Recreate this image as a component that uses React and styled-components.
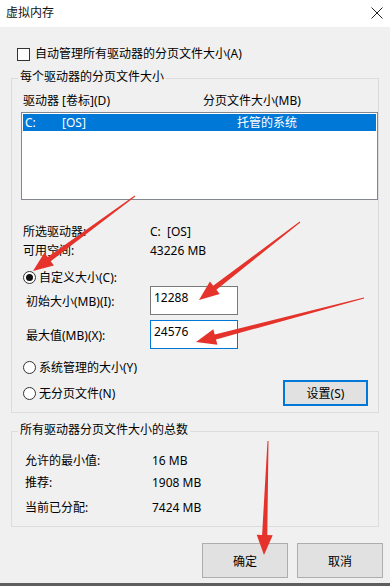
import React from "react";
import styled, { createGlobalStyle } from "styled-components";

const Global = createGlobalStyle`
  html, body { margin: 0; padding: 0; }
  body {
    width: 390px; height: 586px; overflow: hidden; background: #f0f0f0;
    font-family: "Noto Sans", "Noto Sans CJK SC", sans-serif;
    font-size: 12px; color: #000;
  }
  * { box-sizing: border-box; }
`;

const Window = styled.div`
  position: relative;
  width: 390px;
  height: 586px;
  display: flex;
  flex-direction: column;
  background: #f0f0f0;
  overflow: hidden;
`;

const TitleBar = styled.div`
  height: 27px;
  flex: none;
  background: #fff;
  display: flex;
  align-items: center;
  justify-content: space-between;
  padding: 0 7px 1px 6px;
  line-height: 16px;
`;

const Title = styled.span`
  color: #111;
`;

const CheckRow = styled.label`
  display: flex;
  align-items: center;
  gap: 5px;
  height: 18px;
  line-height: 18px;
  margin: 18px 0 0 17px;
`;

const CheckBox = styled.span`
  width: 13px;
  height: 13px;
  border: 1px solid #333;
  background: #fff;
  flex: none;
`;

const Group = styled.fieldset`
  margin: ${(p) => p.$top}px 11px 0 11px;
  padding: 0 0 ${(p) => p.$bottom}px 0;
  border: 1px solid #dcdcdc;
  min-width: 0;
`;

const Legend = styled.legend`
  margin-left: 6px;
  padding: 0 2px 2px;
  line-height: 16px;
  color: #000;
`;

const HeaderRow = styled.div`
  display: grid;
  grid-template-columns: 180px 1fr;
  padding-left: 11px;
  margin-top: 5px;
  line-height: 18px;
  height: 18px;
`;

const ListBox = styled.div`
  margin: 2px 0 0 9px;
  height: 88px;
  border: 1px solid #828790;
  background: #fff;
  padding: 1px;
`;

const ListRow = styled.div`
  display: grid;
  grid-template-columns: 37px 175px 1fr;
  height: 17px;
  line-height: 17px;
  padding-left: 2px;
  background: ${(p) => (p.$selected ? "#0078d7" : "transparent")};
  color: ${(p) => (p.$selected ? "#fff" : "#000")};
`;

const InfoGrid = styled.div`
  display: grid;
  grid-template-columns: 127px 1fr;
  grid-auto-rows: 19px;
  line-height: 19px;
  padding-left: 11px;
  margin-top: 22px;
`;

const RadioRow = styled.label`
  display: flex;
  align-items: center;
  gap: 3px;
  height: ${(p) => p.$h || 17}px;
  line-height: 17px;
  padding-left: 11px;
  margin-top: ${(p) => p.$mt || 0}px;
  grid-column: 1;
`;

const Radio = styled.span`
  width: 13px;
  height: 13px;
  border-radius: 50%;
  border: 1px solid #333;
  background: #fff;
  flex: none;
  display: flex;
  align-items: center;
  justify-content: center;
  &::after {
    content: "";
    width: 7px;
    height: 7px;
    border-radius: 50%;
    background: ${(p) => (p.$checked ? "#111" : "transparent")};
  }
`;

const SizeGrid = styled.div`
  display: grid;
  grid-template-columns: 124px 88px;
  grid-auto-rows: 29px;
  row-gap: 5px;
  padding-left: 14px;
  align-items: center;
`;

const Input = styled.div`
  height: 29px;
  border: 1px solid ${(p) => (p.$focused ? "#0078d7" : "#7a7a7a")};
  background: #fff;
  padding: 3px 3px;
  line-height: 16px;
  align-self: stretch;
`;

const OptionGrid = styled.div`
  display: grid;
  grid-template-columns: 1fr auto;
  grid-template-rows: 26px 26px;
  margin-top: 5px;
  padding-right: 10px;
`;

const SetButton = styled.button`
  grid-column: 2;
  grid-row: 2;
  width: 85px;
  height: 26px;
  border: 2px solid #0078d7;
  background: #e1e1e1;
  font: inherit;
  color: #000;
  padding: 0;
`;

const TotalGrid = styled.div`
  display: grid;
  grid-template-columns: 127px 1fr;
  grid-template-rows: 22px 25px 22px;
  line-height: 22px;
  padding-left: 13px;
  margin-top: 10px;
`;

const ButtonBar = styled.div`
  display: flex;
  justify-content: flex-end;
  gap: 9px;
  margin: 16px 7px 0 0;
`;

const DialogButton = styled.button`
  width: 86px;
  height: 35px;
  border: 1px solid #adadad;
  background: #e1e1e1;
  font: inherit;
  color: #000;
  padding: 0;
`;

const BottomEdge = styled.div`
  margin-top: auto;
  height: 3px;
  background: #5e5e5e;
  flex: none;
`;

const Overlay = styled.svg`
  position: absolute;
  left: 0;
  top: 0;
  pointer-events: none;
`;

function arrowPoints([x1, y1], [x2, y2]) {
  const dx = x2 - x1;
  const dy = y2 - y1;
  const len = Math.hypot(dx, dy);
  const ux = dx / len;
  const uy = dy / len;
  const nx = -uy;
  const ny = ux;
  const L = 20;
  const W = 8;
  const bx = x2 - ux * L;
  const by = y2 - uy * L;
  const pts = [
    [x1 + nx * 0.5, y1 + ny * 0.5],
    [bx + nx * 2.6, by + ny * 2.6],
    [bx + nx * W, by + ny * W],
    [x2, y2],
    [bx - nx * W, by - ny * W],
    [bx - nx * 2.6, by - ny * 2.6],
    [x1 - nx * 0.5, y1 - ny * 0.5],
  ];
  return pts.map((p) => p.map((v) => v.toFixed(1)).join(",")).join(" ");
}

const arrows = [
  [[135, 196], [33, 271]],
  [[300, 222], [199, 300]],
  [[364, 298], [196, 342]],
  [[268, 441], [264, 555]],
];

function CloseIcon() {
  return (
    <svg width="12" height="12" viewBox="0 0 12 12">
      <path d="M0.5 0.5 L11.5 11.5 M11.5 0.5 L0.5 11.5" stroke="#222" strokeWidth="1" fill="none" />
    </svg>
  );
}

export default function App() {
  return (
    <>
      <Global />
      <Window>
        <TitleBar>
          <Title>虚拟内存</Title>
          <CloseIcon />
        </TitleBar>

        <CheckRow>
          <CheckBox />
          <span>自动管理所有驱动器的分页文件大小(A)</span>
        </CheckRow>

        <Group $top={6} $bottom={6}>
          <Legend>每个驱动器的分页文件大小</Legend>
          <HeaderRow>
            <span>驱动器 [卷标](D)</span>
            <span>分页文件大小(MB)</span>
          </HeaderRow>
          <ListBox>
            <ListRow $selected>
              <span>C:</span>
              <span>[OS]</span>
              <span>托管的系统</span>
            </ListRow>
          </ListBox>

          <InfoGrid>
            <span>所选驱动器:</span>
            <span>C:&nbsp;&nbsp;[OS]</span>
            <span>可用空间:</span>
            <span>43226 MB</span>
          </InfoGrid>

          <RadioRow $mt={9}>
            <Radio $checked />
            <span>自定义大小(C):</span>
          </RadioRow>

          <SizeGrid>
            <span>初始大小(MB)(I):</span>
            <Input>12288</Input>
            <span>最大值(MB)(X):</span>
            <Input $focused>24576</Input>
          </SizeGrid>

          <OptionGrid>
            <RadioRow $h={26}>
              <Radio />
              <span>系统管理的大小(Y)</span>
            </RadioRow>
            <RadioRow $h={26}>
              <Radio />
              <span>无分页文件(N)</span>
            </RadioRow>
            <SetButton>设置(S)</SetButton>
          </OptionGrid>
        </Group>

        <Group $top={9} $bottom={7}>
          <Legend>所有驱动器分页文件大小的总数</Legend>
          <TotalGrid>
            <span>允许的最小值:</span>
            <span>16 MB</span>
            <span>推荐:</span>
            <span>1908 MB</span>
            <span>当前已分配:</span>
            <span>7424 MB</span>
          </TotalGrid>
        </Group>

        <ButtonBar>
          <DialogButton>确定</DialogButton>
          <DialogButton>取消</DialogButton>
        </ButtonBar>

        <BottomEdge />

        <Overlay width="390" height="586" viewBox="0 0 390 586">
          {arrows.map(([a, b], i) => (
            <polygon key={i} points={arrowPoints(a, b)} fill="#e5322b" />
          ))}
        </Overlay>
      </Window>
    </>
  );
}
